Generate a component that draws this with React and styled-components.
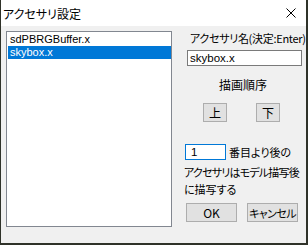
import React from "react";
import styled, { createGlobalStyle } from "styled-components";

const GlobalStyle = createGlobalStyle`
  html, body { margin: 0; padding: 0; background: #ffffff; }
  body { font-family: "Noto Sans CJK JP", "Noto Sans", sans-serif; }
  * { box-sizing: border-box; }
`;

const Window = styled.div`
  width: 308px;
  height: 245px;
  display: flex;
  flex-direction: column;
  background: #f0f0f0;
  border-left: 1px solid #2f3229;
  border-right: 2px solid #2f3229;
  border-bottom: 2px solid #2f3229;
  color: #000;
  font-feature-settings: "palt";
`;

const TitleBar = styled.div`
  height: 26px;
  flex: none;
  display: flex;
  align-items: center;
  background: #ffffff;
  padding-left: 2px;
  font-size: 12px;
`;

const CloseIcon = styled.svg`
  margin-left: auto;
  margin-right: 10px;
  width: 10px;
  height: 10px;
`;

const Body = styled.div`
  flex: 1;
  display: flex;
  padding: 5px 0 0 5px;
`;

const ListBox = styled.div`
  width: 166px;
  height: 196px;
  border: 1px solid #828790;
  background: #ffffff;
  padding: 1px 0 0 1px;
  display: flex;
  flex-direction: column;
`;

const ListItem = styled.div`
  height: 13px;
  line-height: 13px;
  font-family: "Liberation Sans", Arial, sans-serif;
  font-size: 11px;
  padding-left: 2px;
  white-space: nowrap;
  background: ${(p) => (p.$selected ? "#0078d7" : "transparent")};
  color: ${(p) => (p.$selected ? "#ffffff" : "#000000")};
`;

const RightCol = styled.div`
  margin-left: 12px;
  width: 118px;
  display: flex;
  flex-direction: column;
`;

const Label = styled.div`
  margin-top: 1px;
  padding-left: 6px;
  font-size: 11px;
  line-height: 13px;
  letter-spacing: -0.3px;
  white-space: nowrap;
`;

const TextBox = styled.div`
  height: 16px;
  width: ${(p) => p.$w}px;
  margin-top: ${(p) => p.$mt || 0}px;
  margin-left: ${(p) => p.$ml || 0}px;
  border: 1px solid ${(p) => (p.$focused ? "#0078d7" : "#7a7a7a")};
  background: #ffffff;
  font-family: "Liberation Sans", Arial, sans-serif;
  font-size: 11.5px;
  line-height: 14px;
  padding-left: ${(p) => p.$pl || 2}px;
  white-space: nowrap;
  flex: none;
`;

const Heading = styled.div`
  margin-top: 12px;
  text-align: center;
  font-size: 12px;
  line-height: 14px;
`;

const ButtonRow = styled.div`
  display: flex;
  margin-top: ${(p) => p.$mt}px;
  padding-left: ${(p) => p.$pl}px;
  gap: ${(p) => p.$gap}px;
`;

const Button = styled.button`
  width: ${(p) => p.$w}px;
  height: ${(p) => p.$h}px;
  padding: 0;
  margin: 0;
  background: #e1e1e1;
  border: 1px solid #adadad;
  font-family: "Noto Sans CJK JP", sans-serif;
  font-feature-settings: "palt";
  font-size: ${(p) => p.$fs || 12}px;
  line-height: 14px;
  color: #000;
  white-space: nowrap;
  letter-spacing: ${(p) => p.$ls || 0}px;
`;

const OrderRow = styled.div`
  display: flex;
  align-items: center;
  margin-top: 22px;
  margin-left: 1px;
  gap: 3px;
  font-size: 11px;
  white-space: nowrap;
`;

const NoteLine = styled.div`
  margin-top: ${(p) => p.$mt || 0}px;
  font-size: 11px;
  line-height: 16.5px;
  letter-spacing: ${(p) => p.$ls}px;
  white-space: nowrap;
`;

export default function App() {
  return (
    <>
      <GlobalStyle />
      <Window>
        <TitleBar>
          アクセサリ設定
          <CloseIcon viewBox="0 0 10 10">
            <path d="M0.5 0.5 L9.5 9.5 M9.5 0.5 L0.5 9.5" stroke="#000" strokeWidth="1" fill="none" />
          </CloseIcon>
        </TitleBar>
        <Body>
          <ListBox>
            <ListItem>sdPBRGBuffer.x</ListItem>
            <ListItem $selected>skybox.x</ListItem>
          </ListBox>
          <RightCol>
            <Label>アクセサリ名(決定:Enter)</Label>
            <TextBox $w={115} $mt={5} $ml={3}>skybox.x</TextBox>
            <Heading>描画順序</Heading>
            <ButtonRow $mt={11} $pl={19} $gap={29}>
              <Button $w={24} $h={19}>上</Button>
              <Button $w={24} $h={19}>下</Button>
            </ButtonRow>
            <OrderRow>
              <TextBox $w={41} $focused $pl={5}>1</TextBox>
              <span>番目より後の</span>
            </OrderRow>
            <NoteLine $mt={4} $ls={-0.8}>アクセサリはモデル描写後</NoteLine>
            <NoteLine $ls={0}>に描写する</NoteLine>
            <ButtonRow $mt={6} $pl={2} $gap={10}>
              <Button $w={51} $h={19}>OK</Button>
              <Button $w={51} $h={19} $fs={11} $ls={-0.6}>キャンセル</Button>
            </ButtonRow>
          </RightCol>
        </Body>
      </Window>
    </>
  );
}
